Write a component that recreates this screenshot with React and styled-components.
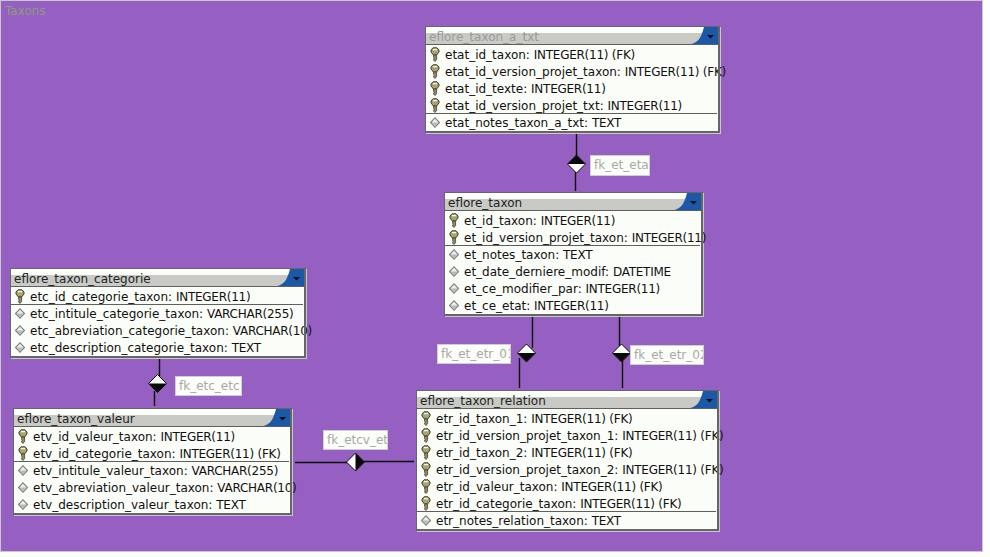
import React from 'react'
import styled, { createGlobalStyle } from 'styled-components'

const GlobalStyle = createGlobalStyle`
  html, body {
    margin: 0;
    padding: 0;
    background: #fdfdfb;
  }
`

const tables = [
  {
    name: 'eflore_taxon_a_txt',
    faded: true,
    x: 425,
    y: 26,
    width: 295,
    keys: [
      'etat_id_taxon: INTEGER(11) (FK)',
      'etat_id_version_projet_taxon: INTEGER(11) (FK)',
      'etat_id_texte: INTEGER(11)',
      'etat_id_version_projet_txt: INTEGER(11)',
    ],
    columns: ['etat_notes_taxon_a_txt: TEXT'],
  },
  {
    name: 'eflore_taxon',
    x: 444,
    y: 192,
    width: 259,
    keys: ['et_id_taxon: INTEGER(11)', 'et_id_version_projet_taxon: INTEGER(11)'],
    columns: [
      'et_notes_taxon: TEXT',
      'et_date_derniere_modif: DATETIME',
      'et_ce_modifier_par: INTEGER(11)',
      'et_ce_etat: INTEGER(11)',
    ],
  },
  {
    name: 'eflore_taxon_categorie',
    x: 10,
    y: 268,
    width: 296,
    keys: ['etc_id_categorie_taxon: INTEGER(11)'],
    columns: [
      'etc_intitule_categorie_taxon: VARCHAR(255)',
      'etc_abreviation_categorie_taxon: VARCHAR(10)',
      'etc_description_categorie_taxon: TEXT',
    ],
  },
  {
    name: 'eflore_taxon_valeur',
    x: 13,
    y: 408,
    width: 279,
    keys: ['etv_id_valeur_taxon: INTEGER(11)', 'etv_id_categorie_taxon: INTEGER(11) (FK)'],
    columns: [
      'etv_intitule_valeur_taxon: VARCHAR(255)',
      'etv_abreviation_valeur_taxon: VARCHAR(10)',
      'etv_description_valeur_taxon: TEXT',
    ],
  },
  {
    name: 'eflore_taxon_relation',
    x: 416,
    y: 390,
    width: 303,
    keys: [
      'etr_id_taxon_1: INTEGER(11) (FK)',
      'etr_id_version_projet_taxon_1: INTEGER(11) (FK)',
      'etr_id_taxon_2: INTEGER(11) (FK)',
      'etr_id_version_projet_taxon_2: INTEGER(11) (FK)',
      'etr_id_valeur_taxon: INTEGER(11) (FK)',
      'etr_id_categorie_taxon: INTEGER(11) (FK)',
    ],
    columns: ['etr_notes_relation_taxon: TEXT'],
  },
]

const labels = [
  { text: 'fk_et_eta', x: 590, y: 155, width: 60, height: 21 },
  { text: 'fk_etc_etc', x: 175, y: 376, width: 67, height: 20 },
  { text: 'fk_et_etr_01', x: 437, y: 344, width: 74, height: 20 },
  { text: 'fk_et_etr_02', x: 630, y: 345, width: 74, height: 20 },
  { text: 'fk_etcv_et', x: 323, y: 430, width: 65, height: 20 },
]

// each relation: line segments, then the diamond with its black half
const lines = [
  [576.5, 133, 576.5, 156],
  [575.5, 172, 575.5, 191],
  [532.5, 317, 532.5, 348],
  [519.5, 358, 519.5, 388],
  [619.5, 317, 619.5, 346],
  [622.5, 360, 622.5, 388],
  [159.5, 359, 159.5, 376],
  [154.5, 391, 154.5, 406],
  [295, 462.5, 347, 462.5],
  [364, 461.5, 414, 461.5],
]

const diamonds = [
  { x: 576.5, y: 164, black: 'top' },
  { x: 526.5, y: 353, black: 'bottom' },
  { x: 621.5, y: 353, black: 'bottom' },
  { x: 157.5, y: 383.5, black: 'bottom' },
  { x: 355.5, y: 462, black: 'right' },
]

const blackHalf = {
  top: 'M-9 0L0 -9L9 0Z',
  bottom: 'M-9 0L0 9L9 0Z',
  right: 'M0 -9L9 0L0 9Z',
}

const Canvas = styled.div`
  position: relative;
  box-sizing: border-box;
  width: 983px;
  height: 552px;
  background: #9560c1;
  border: 1px solid #c9c6cf;
  overflow: hidden;
  font-family: 'DejaVu Sans', 'Liberation Sans', sans-serif;
  font-size: 12px;
`

const Title = styled.div`
  padding: 3px 0 0 4px;
  line-height: 15px;
  color: #8d9c7f;
`

const Links = styled.svg`
  position: absolute;
  left: -1px;
  top: -1px;
`

const TableBox = styled.div`
  position: absolute;
  left: ${(p) => p.$x - 1}px;
  top: ${(p) => p.$y - 1}px;
  width: ${(p) => p.$width}px;
  box-sizing: border-box;
  padding: 1px 2px 2px 1px;
  background: #fbfdf8;
  box-shadow: 1px 1px 0 #c9c6cf;
  // the frame sits above the text, a long column runs under it and out
  &::after {
    content: '';
    position: absolute;
    inset: 0;
    border: solid #666763;
    border-width: 1px 2px 2px 1px;
    pointer-events: none;
  }
`

const Header = styled.div`
  position: relative;
  height: 17px;
  padding-left: 3px;
  line-height: 21px;
  white-space: nowrap;
  overflow: hidden;
  border-bottom: 1px solid #5f605c;
  color: ${(p) => (p.$faded ? '#9a9a98' : '#222222')};
  background: linear-gradient(#fbfdf8 0 6px, #c9cac6 6px);
`

const Corner = styled.svg`
  position: absolute;
  right: 0;
  top: 0;
`

const KeyGroup = styled.div`
  padding-top: 1px;
`

const Row = styled.div`
  display: flex;
  align-items: center;
  height: 17px;
  padding-left: 3px;
  white-space: pre;
  color: #111111;
`

const RowIcon = styled.svg`
  flex: none;
  width: 12px;
  height: 15px;
  margin-right: 4px;
`

const ColumnType = styled.span`
  letter-spacing: -0.25px;
`

const Divider = styled.div`
  position: relative;
  height: 1px;
  margin: -1px 1px 0 0;
  background: #5f605c;
`

const Label = styled.div`
  position: absolute;
  left: ${(p) => p.$x - 1}px;
  top: ${(p) => p.$y - 1}px;
  width: ${(p) => p.$width}px;
  height: ${(p) => p.$height}px;
  box-sizing: border-box;
  padding: 0 1px 0 3px;
  line-height: ${(p) => p.$height - 2}px;
  overflow: hidden;
  white-space: nowrap;
  color: #a8a9a6;
  background: #fbfdf8;
  border: 1px solid #cfcfd0;
`

function KeyIcon() {
  return (
    <RowIcon viewBox="0 0 12 15">
      <path d="M2 3L4 .8H8L10 3V5L7.6 8H4.4L2 5Z" fill="#a8a46a" stroke="#3f3f38" />
      <path d="M4 2.6H8" stroke="#f4f4e6" strokeWidth="1.4" />
      <path d="M4.6 8H7.6V12.5L6 14.5L4.6 13V12L5.4 11.2L4.6 10.4Z" fill="#8f8d58" stroke="#3f3f38" strokeWidth="0.8" />
    </RowIcon>
  )
}

function ColumnIcon() {
  return (
    <RowIcon viewBox="0 0 12 15">
      <path d="M6 2l5.2 5.5L6 13 .8 7.5z" fill="#77787a" />
      <path d="M6 3.6l3.6 3.9L6 11.4 2.4 7.5z" fill="#eeefeb" />
      <path d="M2.4 7.5H9.6L6 11.4z" fill="#b9bab6" />
    </RowIcon>
  )
}

function Column({ text }) {
  const [name, type] = text.split(': ')
  return (
    <>
      {name}: <ColumnType>{type}</ColumnType>
    </>
  )
}

function Table({ name, faded, x, y, width, keys, columns }) {
  return (
    <TableBox $x={x} $y={y} $width={width}>
      <Header $faded={faded}>
        {name}
        <Corner width="27" height="17" viewBox="0 0 27 17">
          <path d="M0 17C6 16 10 12 13 0H27V17Z" fill="#1b59a8" />
          <path d="M16 8H23L19.5 11.5Z" fill="#0c0c10" />
        </Corner>
      </Header>
      <KeyGroup>
        {keys.map((k) => (
          <Row key={k}>
            <KeyIcon />
            <Column text={k} />
          </Row>
        ))}
      </KeyGroup>
      <Divider />
      {columns.map((c) => (
        <Row key={c}>
          <ColumnIcon />
          <Column text={c} />
        </Row>
      ))}
    </TableBox>
  )
}

export default function App() {
  return (
    <>
      <GlobalStyle />
      <Canvas>
        <Title>Taxons</Title>
        <Links width="983" height="552" viewBox="0 0 983 552">
          {lines.map(([x1, y1, x2, y2]) => (
            <line key={`${x1}-${y1}`} x1={x1} y1={y1} x2={x2} y2={y2} stroke="#0a0a0a" strokeWidth="1.4" />
          ))}
          {diamonds.map((d) => (
            <g key={d.x} transform={`translate(${d.x} ${d.y})`}>
              <path d="M-9 0L0 -9L9 0L0 9Z" fill="#fbfdf8" stroke="#0a0a0a" />
              <path d={blackHalf[d.black]} fill="#0a0a0a" />
            </g>
          ))}
        </Links>
        {tables.map((t) => (
          <Table key={t.name} {...t} />
        ))}
        {labels.map((l) => (
          <Label key={l.text} $x={l.x} $y={l.y} $width={l.width} $height={l.height}>
            {l.text}
          </Label>
        ))}
      </Canvas>
    </>
  )
}
